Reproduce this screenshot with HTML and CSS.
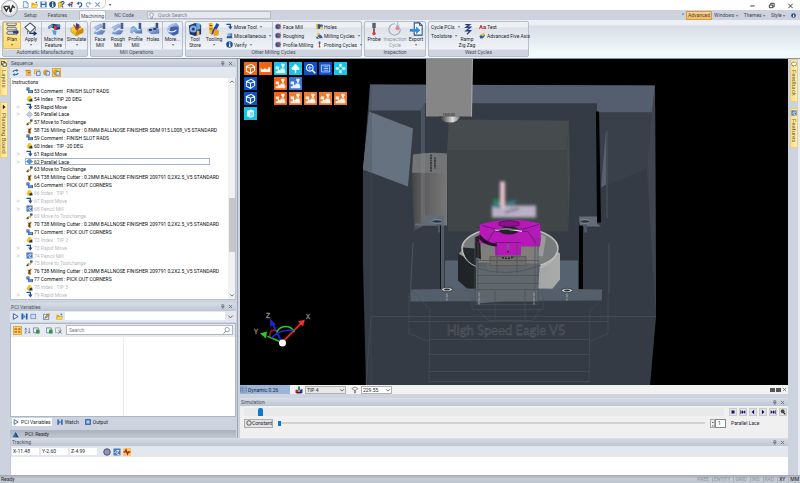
FILE: index.html
```html
<!DOCTYPE html>
<html lang="en">
<head>
<meta charset="utf-8">
<title>Machining</title>
<link rel="stylesheet" href="styles.css">
</head>
<body>
<svg class="defs" aria-hidden="true">
<defs>
<linearGradient id="gb" x1="0" y1="0" x2="1" y2="1"><stop offset="0" stop-color="#cfe0f8"/><stop offset="1" stop-color="#4468b4"/></linearGradient>
<linearGradient id="gy" x1="0" y1="0" x2="0" y2="1"><stop offset="0" stop-color="#ffe75a"/><stop offset="1" stop-color="#e8a400"/></linearGradient>
</defs>
<symbol id="new" viewBox="0 0 16 16"><path d="M3 1h7l4 4v10H3z" fill="#eaf3ff" stroke="#4d7ec0" stroke-width="1.5"/><path d="M10 1v4h4" fill="none" stroke="#4d7ec0"/></symbol>
<symbol id="open" viewBox="0 0 16 16"><path d="M1 4h5l2 2h6v8H1z" fill="#e4a81c"/><path d="M4 8h12l-3 7H1z" fill="#ffd95a" stroke="#b98512" stroke-width=".7"/><path d="M9 3l5-2v4" fill="#2d66c4"/></symbol>
<symbol id="save" viewBox="0 0 16 16"><path d="M1 1h13l1 1v13H1z" fill="#2c64b8"/><path d="M4 1h8v5H4zM4 9h8v6H4z" fill="#e5f0ff"/></symbol>
<symbol id="info" viewBox="0 0 16 16"><circle cx="8" cy="8" r="7.5" fill="#1c4f94"/><path d="M7 3h3v2H7zM6 6h4v6h1v1H6v-1h1V7H6z" fill="#fff"/></symbol>
<symbol id="help" viewBox="0 0 16 16"><path d="M1 3l8-2v12l-8 2z" fill="#f5c83a" stroke="#a4770e"/><path d="M6 4q5-5 8-1 0 3-4 5v2" fill="none" stroke="#204f9b" stroke-width="2.4"/><path d="M9 12h3v3H9z" fill="#204f9b"/></symbol>
<symbol id="move" viewBox="0 0 16 16"><path d="M1 8l6-4v3h4v3H7v4z" fill="#2a67c0"/><path d="M8 2h6v4H8z" fill="#d8392d"/><path d="M10 6h2v8h-2z" fill="#7f2b25"/></symbol>
<symbol id="undo" viewBox="0 0 16 16"><path d="M4 5q9-3 9 3 0 5-6 6" fill="none" stroke="#2d63ba" stroke-width="2.6"/><path d="M1 6l6-5v8z" fill="#2d63ba"/></symbol>
<symbol id="redo" viewBox="0 0 16 16"><path d="M12 5Q3 2 3 8q0 5 6 6" fill="none" stroke="#93add5" stroke-width="2.6"/><path d="M15 6L9 1v8z" fill="#93add5"/></symbol>
<symbol id="cross" viewBox="0 0 16 16"><path d="M3 3l10 10M13 3L3 13" stroke="#879fc5" stroke-width="2.6"/></symbol>
<symbol id="x" viewBox="0 0 8 8"><path d="M1.500 1.500l5 5M6.500 1.500l-5 5" stroke="#4e555f" stroke-width="1.100"/></symbol>
<symbol id="pin" viewBox="0 0 8 8"><path d="M3 1h3v3.500H3zM2 4.500h5M4.500 4.500V8" fill="none" stroke="#59616d"/></symbol>
<symbol id="plan" viewBox="0 0 16 16"><g fill="#e4e6e8" stroke="#444b55" stroke-width=".9"><rect x="2" y="1" width="11" height="3" rx="1.500"/><rect x="2" y="6" width="11" height="3" rx="1.500"/><rect x="2" y="11" width="11" height="3" rx="1.500"/></g><path d="M9 10h4V8l3 3.500-3 3.500v-2H9z" fill="#214985"/></symbol>
<symbol id="apply" viewBox="0 0 16 16"><path d="M7 1l6 5-6 6-6-6z" fill="#f5f6f7" stroke="#495262" stroke-width="1.200"/><path d="M4 9v5M13 7v3" stroke="#6b7585"/><path d="M11 10l4 3-4 3z" fill="#16335f"/><path d="M6 13h6" stroke="#16335f" stroke-width="1.500"/></symbol>
<symbol id="feat" viewBox="0 0 16 16"><path d="M2 5l4-3 9 1v5l-4 1-6-3-3 2z" fill="#1e3566"/><path d="M1 5l5-3 1 3-5 3z" fill="#7896c8"/><path d="M8 4h3v5H8z" fill="#d33c2f"/><path d="M6 9l5 1-1 5-3-1z" fill="#52a1df"/><path d="M11 3h4v3h-4z" fill="#4776b7"/></symbol>
<symbol id="sim" viewBox="0 0 16 16"><path d="M1 7l8-3 6 4v4l-8 4-6-5z" fill="url(#gy)" stroke="#9e7509" stroke-width=".5"/><path d="M7 15V11l8-4v5z" fill="#c98c00"/><path d="M7 1l4 2-2 7-3-2z" fill="#33437b"/><path d="M4 3l4 6 4-4" fill="none" stroke="#df3c26" stroke-width="1.300"/></symbol>
<symbol id="mill" viewBox="0 0 16 16"><path d="M1 6l8-4 2 3-4 4 7 1-3 4q-6 1-10-1l3-4z" fill="url(#gb)" stroke="#7e96c2" stroke-width=".5"/><path d="M3 11q4-1 6-4" fill="none" stroke="#e6effc" stroke-width="1.300"/><path d="M11 1h3v7h-3z" fill="#304979"/><path d="M12.500 1v7" stroke="#94acd4" stroke-width=".6"/></symbol>
<symbol id="profile" viewBox="0 0 16 16"><path d="M1 12q1-8 5-7 2 5 5 5l4-2v5H8q-3-4-4 0z" fill="url(#gb)"/><path d="M2 8q3-5 6 0t6 0" fill="none" stroke="#5ab0df" stroke-width="1.300"/><path d="M11 1h3v7h-3z" fill="#3b5b93"/></symbol>
<symbol id="holes" viewBox="0 0 16 16"><path d="M1 7l9-2 5 3v5l-9 1-5-4z" fill="url(#gb)"/><ellipse cx="5" cy="9" rx="2" ry="1.200" fill="#25365a"/><ellipse cx="10" cy="8" rx="2" ry="1.200" fill="#25365a"/><path d="M11 1h3v6h-3z" fill="#32518c"/></symbol>
<symbol id="more" viewBox="0 0 16 16"><path d="M2 5l4-3 6-1 3 4-1 8-5 3-6-3-2-4z" fill="url(#gb)"/><path d="M5 6q6-2 9 0v7l-6 2-4-3z" fill="#3f60ac"/><path d="M2 10q6 3 10-1" fill="none" stroke="#e2ecfc" stroke-width="1.300"/></symbol>
<symbol id="store" viewBox="0 0 16 16"><path d="M1 4l7-3 7 2v11l-7 2-6-2z" fill="#19366e"/><circle cx="6" cy="8" r="4" fill="#88aee2"/><circle cx="6" cy="8" r="1.800" fill="#203f77"/><path d="M9 1l5 1v6l-4 1z" fill="#65a5e3"/><path d="M10 10h3v5h-3z" fill="#ecb53e"/></symbol>
<symbol id="tooling" viewBox="0 0 16 16"><path d="M2 1h4l1 6-1 6-3 1z" fill="#f3b71d"/><path d="M11 1l3 2-5 9-4 3 1-5z" fill="#1e4aa5"/><path d="M9 8l5 2-1 5-5 1-1-3z" fill="#ef9f13"/><path d="M3 4h3M3 8h3" stroke="#704a09"/></symbol>
<symbol id="rapid" viewBox="0 0 16 16"><path d="M1 3h9v6" fill="none" stroke="#1e4f9d" stroke-width="3"/><path d="M5 8h10l-5 7z" fill="#1e4f9d"/></symbol>
<symbol id="misc" viewBox="0 0 16 16"><path d="M1 14h14l-2-5H3z" fill="#2459a2"/><circle cx="7" cy="6" r="4" fill="#77aee5"/><path d="M10 3h4v6h-4z" fill="#5f7395"/></symbol>
<symbol id="bluemill" viewBox="0 0 16 16"><circle cx="7" cy="8" r="6.500" fill="#5575b6"/><path d="M3 5h7v7H3z" fill="#223e78"/><path d="M5 7l8-5M5 8h9M6 9l7 5" stroke="#df5144" stroke-width="1.500"/></symbol>
<symbol id="hole2" viewBox="0 0 16 16"><path d="M1 2h5v12H1z" fill="#d4a51e"/><path d="M5 3h4v10H5z" fill="#1d3770"/><circle cx="12" cy="7" r="4" fill="#2e62b5"/><path d="M11 8h4v7h-4z" fill="#f2bb2e"/></symbol>
<symbol id="cyc" viewBox="0 0 16 16"><path d="M3 3h6v7H3z" fill="#ecb31a"/><path d="M7 6q8 0 8 8H8q0-4-5-4z" fill="#345da4"/><path d="M1 10l7 5H1z" fill="#102d5f"/></symbol>
<symbol id="probe" viewBox="0 0 16 16"><path d="M6 1h4v6H6z" fill="#55637a"/><path d="M7 7h2v5H7z" fill="#8c4540"/><circle cx="8" cy="13" r="2" fill="#d94235"/></symbol>
<symbol id="insp" viewBox="0 0 16 16"><path d="M14 8A6.500 6.500 0 1 1 8 2" fill="none" stroke="#a5abb6" stroke-width="1.300"/><path d="M11 0v5M9 3l2 3 2-3" stroke="#92b7dc" fill="none"/><circle cx="11" cy="7" r="2.400" fill="#df8d8b"/></symbol>
<symbol id="export" viewBox="0 0 16 16"><path d="M6 1h6l3 3v11H6z" fill="#f8fbff" stroke="#284e88" stroke-width="1.200"/><path d="M12 1v3h3" fill="none" stroke="#284e88"/><path d="M1 8h7V5l5 4.500L8 14v-3H1z" fill="#2f91db"/></symbol>
<symbol id="zig" viewBox="0 0 16 16"><path d="M6 3h5l-4 3h5l-5 4h5l-4 4" fill="none" stroke="#283e7b" stroke-width="1.500"/></symbol>
<symbol id="five" viewBox="0 0 16 16"><path d="M1 9l7-4 6 3-5 6-6 1z" fill="#245aab"/><path d="M4 6l8-5 1 6-5 3z" fill="#eeb832"/></symbol>
<symbol id="refresh" viewBox="0 0 16 16"><path d="M2 7q2-5 9-4M14 9q-2 5-9 4" fill="none" stroke="#2b669f" stroke-width="2.500"/><path d="M10 0l5 3-5 4zM6 16l-5-3 5-4z" fill="#2b669f"/></symbol>
<symbol id="doc1" viewBox="0 0 16 16"><path d="M1 2h12v3H1z" fill="#c98c16"/><path d="M3 5h10v10H3z" fill="#f7ca5c" stroke="#b88216"/><path d="M6 8h6M6 11h4" stroke="#b63824" stroke-width="1.500"/></symbol>
<symbol id="doc2" viewBox="0 0 16 16"><path d="M1 2h12v9H1z" fill="#f2d17a" stroke="#ac8127"/><path d="M6 6h8v9H6z" fill="#d9e9ff" stroke="#2d62a8" stroke-width="1.500"/></symbol>
<symbol id="doc3" viewBox="0 0 16 16"><circle cx="7" cy="8" r="6" fill="#e2b038" stroke="#9b711d"/><path d="M7 6h8v8H7z" fill="#e7edf7" stroke="#39649b" stroke-width="1.500"/></symbol>
<symbol id="comment" viewBox="0 0 16 16"><path d="M1 1h7v7H1z" fill="#25559d"/><path d="M2 3h5M2 5h5" stroke="#b3d1f1"/><path d="M5 7h11v7H5z" fill="#275ca7"/><path d="M7 9h7M7 11.500h7" stroke="#fff"/></symbol>
<symbol id="index" viewBox="0 0 16 16"><path d="M1 11l5-9 5 1 3 7-4 5z" fill="#f4c619"/><path d="M8 10l6-2 1 7H6z" fill="#28374f"/><path d="M1 11l7 1v3z" fill="#d89c00"/></symbol>
<symbol id="lace" viewBox="0 0 16 16"><path d="M8 1l7 7-7 7-7-7z" fill="#e2deef" stroke="#7a8daf"/><path d="M3 7h10M5 4h6M4 10h8" stroke="#9a94ba"/></symbol>
<symbol id="laceb" viewBox="0 0 16 16"><path d="M8 1l8 7-8 7-8-7z" fill="#3d82c8"/><path d="M3 7h10M5 4h6M4 10h8" stroke="#9cc9ed"/></symbol>
<symbol id="change" viewBox="0 0 16 16"><path d="M1 14l5-6 4 2 3-7" fill="none" stroke="#d69c28" stroke-width="2.500"/><path d="M9 1h6v5H9z" fill="#315a9a"/><circle cx="4" cy="12" r="2.500" fill="#3c455b"/></symbol>
<symbol id="cutter" viewBox="0 0 16 16"><path d="M3 1l3 4 5-4 2 3-3 4 2 6-4 2-4-4 1-5z" fill="#bb7517"/><path d="M6 5l3 1-2 7" stroke="#2f2a21" stroke-width="2" fill="none"/></symbol>
<symbol id="pencil" viewBox="0 0 16 16"><path d="M1 1h14v14H1z" fill="#4c77b6"/><path d="M3 10q4-7 9-5l-5 6 6 3" fill="none" stroke="#e9f3ff" stroke-width="2"/></symbol>
<symbol id="play" viewBox="0 0 16 16"><path d="M3 1.500L14 8 3 14.500z" fill="#eef5ff" stroke="#1e4e99" stroke-width="2"/></symbol>
<symbol id="step" viewBox="0 0 16 16"><path d="M1 1h4v14H1zM11 1h4v14h-4z" fill="#2561a6"/><path d="M5 3l6 5-6 5z" fill="#4c8fd2"/></symbol>
<symbol id="stopb" viewBox="0 0 16 16"><rect x="2" y="3" width="11" height="10" fill="#cfe0f6" stroke="#7293c3" stroke-width="2"/></symbol>
<symbol id="outp" viewBox="0 0 16 16"><rect x="2" y="2" width="12" height="12" fill="#a9c9f0" stroke="#2258a5" stroke-width="3"/></symbol>
<symbol id="edit" viewBox="0 0 16 16"><path d="M1 3h12v12H1z" fill="#e8f1fc" stroke="#39659a" stroke-width="1.500"/><path d="M4 12l2-4 6-7 3 3-7 7z" fill="#e8a01c" stroke="#523c1d"/></symbol>
<symbol id="cat" viewBox="0 0 16 16"><path d="M1 3h6v4H1zM1 9h6v4H1zM9 3h6v4H9zM9 9h6v4H9z" fill="#c47b1a"/></symbol>
<symbol id="az" viewBox="0 0 16 16"><path d="M2 7l2-5 2 5M2 9h4l-4 5h4M12 2v12M9 11l3 3 3-3" fill="none" stroke="#45689e" stroke-width="1.500"/></symbol>
<symbol id="grid1" viewBox="0 0 16 16"><path d="M1 2h11v11H1z" fill="#e9eef6" stroke="#4f6585" stroke-width="1.500"/><path d="M7 6h8v9H7z" fill="#379342"/></symbol>
<symbol id="grid2" viewBox="0 0 16 16"><path d="M1 2h11v11H1z" fill="#eee" stroke="#888f98" stroke-width="1.500"/><path d="M8 7l7 8M15 7l-7 8" stroke="#777" stroke-width="2"/></symbol>
<symbol id="lens" viewBox="0 0 16 16"><circle cx="9.500" cy="6" r="5" fill="none" stroke="#5c6470" stroke-width="1.400"/><path d="M6 10l-5 5" stroke="#5c6470" stroke-width="1.600"/></symbol>
<symbol id="cube" viewBox="0 0 16 16"><path d="M2 5l7-3 5 3v6l-6 4-6-3zM2 5l6 2.500L14 5M8 7.500V15" fill="none" stroke="#fff" stroke-width="1.500"/></symbol>
<symbol id="cubef" viewBox="0 0 16 16"><path d="M3 4l6-2 4 2v8l-5 2-5-2z" fill="#dffaff"/><path d="M7 6l5-1v6l-5 2z" fill="#8edff3"/></symbol>
<symbol id="bed" viewBox="0 0 16 16"><path d="M1 13V7h1v2h4V8h3v1h3V6h3v7z" fill="#fff"/></symbol>
<symbol id="mach" viewBox="0 0 16 16"><path d="M1 5h5v5h2V8h6v3h1v4H1v-3h3V9H1z" fill="#fff" opacity=".88"/><path d="M9 1h5v3h-1v3h-3V4H9z" fill="#fff" opacity=".9"/></symbol>
<symbol id="tree" viewBox="0 0 16 16"><path d="M8 1l6 7-1 2H9v5H7v-5H3L2 8z" fill="#fff"/></symbol>
<symbol id="zoom" viewBox="0 0 16 16"><circle cx="7" cy="7" r="4.800" fill="none" stroke="#fff" stroke-width="1.500"/><path d="M10.500 10.500L15 15" stroke="#fff" stroke-width="2.300"/><path d="M7 4v6M4 7h6" stroke="#fff"/></symbol>
<symbol id="list" viewBox="0 0 16 16"><path d="M2 3h12v10H2z" fill="none" stroke="#fff"/><path d="M4 5.500h1M6 5.500h6M4 8h1M6 8h6M4 10.500h1M6 10.500h6" stroke="#fff"/></symbol>
<symbol id="axes" viewBox="0 0 16 16"><path d="M8 1v14M1 8h14" stroke="#c8f6fc" stroke-width="3"/><circle cx="8" cy="8" r="2" fill="#2ba1bd"/><path d="M6 3h4M6 13h4M3 6v4M13 6v4" stroke="#fff"/></symbol>
<symbol id="rgb" viewBox="0 0 16 16"><path d="M6 1h4v7H6z" fill="#209a37"/><path d="M1 7l6 1v6H1z" fill="#c4262c"/><path d="M9 8l6-2v8H9z" fill="#2438ba"/><path d="M3 12h10v3H3z" fill="#272b3a"/></symbol>
<symbol id="fan" viewBox="0 0 16 16"><path d="M2 5q6-6 12 0-3 4-5 3v6H7V8Q4 9 2 5z" fill="#f6f6f6" stroke="#555" stroke-width="1.200"/></symbol>
<symbol id="bubble" viewBox="0 0 16 16"><path d="M4 3h8l3 4-2 5H9l-3 3v-3H3L1 7z" fill="#fff" stroke="#555" stroke-width="1.600"/></symbol>
<symbol id="drop" viewBox="0 0 8 8"><path d="M1.500 3L4 5.500 6.500 3" fill="none" stroke="#444b55"/></symbol>
<symbol id="tri" viewBox="0 0 16 16"><path d="M8 2l7 12H1z" fill="#2f70b5"/><path d="M8 2v12h7z" fill="#1d4d8c"/></symbol>
<symbol id="ball" viewBox="0 0 16 16"><circle cx="8" cy="8" r="6.500" fill="#9093b5" stroke="#4d5076" stroke-width="2"/></symbol>
<symbol id="wave" viewBox="0 0 16 16"><path d="M1 8h3l2-4 3 8 2-4h4" fill="none" stroke="#a52926" stroke-width="3"/></symbol>
<symbol id="b-stop" viewBox="0 0 16 16"><path d="M4 4h8v8H4z" fill="#10106e"/></symbol>
<symbol id="b-first" viewBox="0 0 16 16"><path d="M1 3h2v10H1zM8 3v10L3 8zM14 3v10L8 8z" fill="#10106e"/></symbol>
<symbol id="b-prev" viewBox="0 0 16 16"><path d="M11 2v12L4 8z" fill="#10106e"/></symbol>
<symbol id="b-next" viewBox="0 0 16 16"><path d="M5 2v12l7-6z" fill="#10106e"/></symbol>
<symbol id="b-last" viewBox="0 0 16 16"><path d="M15 3h-2v10h2zM8 3v10l5-5zM2 3v10l6-5z" fill="#10106e"/></symbol>
<symbol id="b-mag" viewBox="0 0 16 16"><circle cx="7" cy="6" r="4" fill="#555" stroke="#222" stroke-width="2"/><path d="M9 9l5 5" stroke="#222" stroke-width="3"/></symbol>
<symbol id="layers" viewBox="0 0 16 16"><path d="M1 1h9v9H1z" fill="#fff" stroke="#222" stroke-width="2"/><path d="M5 5h9v9H5z" fill="#fff" stroke="#222" stroke-width="2"/></symbol>
</svg>

<header class="titlebar">
  <button class="orb" aria-label="Application menu"><svg viewBox="0 0 32 32"><circle cx="16" cy="16" r="15" fill="#dcdee2" stroke="#8d929a" stroke-width="1.500"/><circle cx="16" cy="14" r="12" fill="#f4f5f6"/><path d="M5 12l5 9 5-9 3 9 4-10 4 4M7 12h6M15 21h6" fill="none" stroke="#2e3033" stroke-width="2.600"/></svg></button>
  <nav class="quick" aria-label="Quick access">
    <button aria-label="New"><svg><use href="#new"/></svg></button><button aria-label="Open"><svg><use href="#open"/></svg></button><button aria-label="Save"><svg><use href="#save"/></svg></button><button aria-label="Information"><svg><use href="#info"/></svg></button><button aria-label="Help"><svg><use href="#help"/></svg></button><button aria-label="Move"><svg><use href="#move"/></svg></button><button aria-label="Undo"><svg><use href="#undo"/></svg></button><button aria-label="Redo"><svg><use href="#redo"/></svg></button><button aria-label="Delete"><svg><use href="#cross"/></svg></button>
  </nav>
  <button class="quick-more" aria-label="More">▾</button>
  <div class="winbtns">
    <button aria-label="Minimize"><svg viewBox="0 0 8 8"><path d="M1.500 4.500h5" stroke="#222"/></svg></button>
    <button aria-label="Restore"><svg viewBox="0 0 8 8"><path d="M1.500 3.500h4v3h-4zM3 3V1.500h4v4H6" fill="none" stroke="#222"/></svg></button>
    <button aria-label="Close"><svg viewBox="0 0 8 8"><path d="M1.500 2l5 5M6.500 2l-5 5" stroke="#222"/></svg></button>
  </div>
</header>

<div class="tabs">
  <button class="tab">Setup</button><button class="tab">Features</button><button class="tab active">Machining</button><button class="tab wide">NC Code</button>
  <label class="qsearch"><svg viewBox="0 0 8 8"><path d="M4 1q2.500 0 2 2.500L5 5.500v2H3.500v-2L2 3.500Q1.500 1 4 1z" fill="#fff" stroke="#69717c" stroke-width=".7"/></svg><input aria-label="Quick Search" placeholder="Quick Search"></label>
  <div class="tabmenu"><span>^</span><button class="adv">Advanced</button><button>Windows <i>▾</i></button><button>Themes <i>▾</i></button><button>Style <i>▾</i></button><button aria-label="Help"><svg><use href="#info"/></svg></button></div>
</div>

<section class="ribbon">
  <div class="group g1"><div class="items">
    <button class="big on"><svg><use href="#plan"/></svg>Plan<i>▾</i></button>
    <button class="big"><svg><use href="#apply"/></svg>Apply<i>▾</i></button>
    <button class="big line"><svg><use href="#feat"/></svg>Machine<br>Feature</button>
    <button class="big line"><svg><use href="#sim"/></svg>Simulate<i>▾</i></button>
  </div><h2>Automatic Manufacturing</h2></div>
  <div class="group g2"><div class="items">
    <button class="big"><svg><use href="#mill"/></svg>Face<br>Mill</button>
    <button class="big"><svg><use href="#mill"/></svg>Rough<br>Mill</button>
    <button class="big"><svg><use href="#profile"/></svg>Profile<br>Mill</button>
    <button class="big"><svg><use href="#holes"/></svg>Holes</button>
    <button class="big line"><svg><use href="#more"/></svg>More...<i>▾</i></button>
  </div><h2>Mill Operations</h2></div>
  <div class="group g3"><div class="items">
    <button class="big"><svg><use href="#store"/></svg>Tool<br>Store</button>
    <button class="big"><svg><use href="#tooling"/></svg>Tooling<i>▾</i></button>
    <div class="col"><button><svg><use href="#rapid"/></svg>Move Tool <i>▾</i></button><button><svg><use href="#misc"/></svg>Miscellaneous <i>▾</i></button><button><svg><use href="#info"/></svg>Verify <i>▾</i></button></div>
    <div class="col line"><button><svg><use href="#bluemill"/></svg>Face Mill</button><button><svg><use href="#bluemill"/></svg>Roughing</button><button><svg><use href="#bluemill"/></svg>Profile Milling</button></div>
    <div class="col"><button><svg><use href="#hole2"/></svg>Holes</button><button><svg><use href="#cyc"/></svg>Milling Cycles <i>▾</i></button><button><svg><use href="#probe"/></svg>Probing Cycles <i>▾</i></button></div>
  </div><h2>Other Milling Cycles</h2></div>
  <div class="group g4"><div class="items">
    <button class="big"><svg><use href="#probe"/></svg>Probe</button>
    <button class="big" disabled><svg><use href="#insp"/></svg>Inspection<br>Cycle</button>
    <button class="big"><svg><use href="#export"/></svg>Export<i>▾</i></button>
  </div><h2>Inspection</h2></div>
  <div class="group g5"><div class="items">
    <div class="col"><button>Cycle PCIs <i>▾</i></button><button>Toolstore <i>▾</i></button></div>
    <button class="big"><svg><use href="#zig"/></svg>Ramp<br>Zig Zag</button>
    <div class="col"><button><b class="aa">Aa</b>Text</button><button><svg><use href="#five"/></svg>Advanced Five Axis</button></div>
  </div><h2>West Cycles</h2></div>
</section>

<div class="middle">
  <nav class="dock left"><button class="layers"><svg><use href="#layers"/></svg><span>Layers</span></button><button class="board"><svg><use href="#b-next"/></svg><span>Planning Board</span></button></nav>

  <div class="work">
    <div class="upper">
      <aside class="side">
        <section class="panel seq">
          <header class="head"><h2>Sequence</h2><button aria-label="Pin"><svg><use href="#pin"/></svg></button><button aria-label="Close"><svg><use href="#x"/></svg></button></header>
          <div class="tools"><button aria-label="Refresh"><svg><use href="#refresh"/></svg></button><button class="gap" aria-label="Document"><svg><use href="#doc1"/></svg></button><button aria-label="Copy"><svg><use href="#doc2"/></svg></button><button aria-label="Properties"><svg><use href="#doc3"/></svg></button><button class="on" aria-label="Filter"><svg><use href="#doc3"/></svg></button></div>
          <div class="treewrap">
            <div class="tree">
              <h3>Instructions</h3>
              <ul>
                <li><svg><use href="#comment"/></svg><span>53 Comment : FINISH SLOT RADS</span></li>
                <li><svg><use href="#index"/></svg><span>54 Index : TIP 20 DEG</span></li>
                <li class="ex"><svg><use href="#rapid"/></svg><span>55 Rapid Move</span></li>
                <li class="ex"><svg><use href="#lace"/></svg><span>56 Parallel Lace</span></li>
                <li><svg><use href="#change"/></svg><span>57 Move to Toolchange</span></li>
                <li><svg><use href="#cutter"/></svg><span>58 T26 Milling Cutter : 0.8MM BALLNOSE FINISHER SDM 915 L008_V5 STANDARD</span></li>
                <li><svg><use href="#comment"/></svg><span>59 Comment : FINISH SLOT RADS</span></li>
                <li><svg><use href="#index"/></svg><span>60 Index : TIP -20 DEG</span></li>
                <li class="ex"><svg><use href="#rapid"/></svg><span>61 Rapid Move</span></li>
                <li class="ex sel"><svg><use href="#laceb"/></svg><span>62 Parallel Lace</span></li>
                <li><svg><use href="#change"/></svg><span>63 Move to Toolchange</span></li>
                <li><svg><use href="#cutter"/></svg><span>64 T38 Milling Cutter : 0.2MM BALLNOSE FINISHER 209791 0,2X2.5_V5 STANDARD</span></li>
                <li><svg><use href="#comment"/></svg><span>65 Comment : PICK OUT CORNERS</span></li>
                <li class="dim"><svg><use href="#index"/></svg><span>66 Index : TIP 1</span></li>
                <li class="ex dim"><svg><use href="#rapid"/></svg><span>67 Rapid Move</span></li>
                <li class="ex dim"><svg><use href="#pencil"/></svg><span>68 Pencil Mill</span></li>
                <li class="dim"><svg><use href="#change"/></svg><span>69 Move to Toolchange</span></li>
                <li><svg><use href="#cutter"/></svg><span>70 T38 Milling Cutter : 0.2MM BALLNOSE FINISHER 209791 0,2X2.5_V5 STANDARD</span></li>
                <li><svg><use href="#comment"/></svg><span>71 Comment : PICK OUT CORNERS</span></li>
                <li class="dim"><svg><use href="#index"/></svg><span>72 Index : TIP 2</span></li>
                <li class="ex dim"><svg><use href="#rapid"/></svg><span>73 Rapid Move</span></li>
                <li class="ex dim"><svg><use href="#pencil"/></svg><span>74 Pencil Mill</span></li>
                <li class="dim"><svg><use href="#change"/></svg><span>75 Move to Toolchange</span></li>
                <li><svg><use href="#cutter"/></svg><span>76 T38 Milling Cutter : 0.2MM BALLNOSE FINISHER 209791 0,2X2.5_V5 STANDARD</span></li>
                <li><svg><use href="#comment"/></svg><span>77 Comment : PICK OUT CORNERS</span></li>
                <li class="dim"><svg><use href="#index"/></svg><span>78 Index : TIP 3</span></li>
                <li class="ex dim"><svg><use href="#rapid"/></svg><span>79 Rapid Move</span></li>
              </ul>
            </div>
            <div class="scroll"><svg class="up"><use href="#drop"/></svg><div class="thumb"></div><svg><use href="#drop"/></svg></div>
          </div>
        </section>

        <section class="panel pci">
          <header class="head"><h2>PCI Variables</h2><button aria-label="Pin"><svg><use href="#pin"/></svg></button><button aria-label="Close"><svg><use href="#x"/></svg></button></header>
          <div class="tools"><button aria-label="Run"><svg><use href="#play"/></svg></button><button aria-label="Step"><svg><use href="#step"/></svg></button><button aria-label="Stop"><svg><use href="#stopb"/></svg></button><button class="gap" aria-label="Edit"><svg><use href="#edit"/></svg></button><button class="gap" aria-label="Open"><svg><use href="#open"/></svg></button><input aria-label="PCI file"><svg class="dd"><use href="#drop"/></svg></div>
          <div class="box">
            <div class="tools"><button class="on" aria-label="Categorized"><svg><use href="#cat"/></svg></button><button aria-label="Sort"><svg><use href="#az"/></svg></button><button aria-label="Pages"><svg><use href="#grid1"/></svg></button><button class="gap" aria-label="Add"><svg><use href="#grid1"/></svg></button><button aria-label="Remove"><svg><use href="#grid2"/></svg></button><label class="search"><input aria-label="Search" placeholder="Search"><svg><use href="#lens"/></svg></label></div>
            <div class="split"><div></div><div></div></div>
          </div>
          <nav class="ptabs"><button class="active"><svg><use href="#play"/></svg>PCI Variables</button><button><svg><use href="#step"/></svg>Watch</button><button><svg><use href="#outp"/></svg>Output</button></nav>
        </section>
        <div class="pcistat"><svg><use href="#tri"/></svg><span>PCI: Ready</span></div>
      </aside>

      <main class="stage">
        <div class="view">
          <svg class="scene" viewBox="240 59 548 327" preserveAspectRatio="xMidYMid slice" aria-label="Machine simulation">
            <defs>
              <linearGradient id="cyl"><stop offset="0" stop-color="#454545"/><stop offset=".25" stop-color="#5a5a5a"/><stop offset="1" stop-color="#777"/></linearGradient>
              <linearGradient id="nose"><stop offset="0" stop-color="#222"/><stop offset=".3" stop-color="#777"/><stop offset=".65" stop-color="#ddd"/><stop offset="1" stop-color="#777"/></linearGradient>
              <linearGradient id="tbl"><stop offset="0" stop-color="#8e9090"/><stop offset="1" stop-color="#a9abab"/></linearGradient>
              <filter id="soft" x="-50%" y="-50%" width="200%" height="200%"><feGaussianBlur stdDeviation="1.500"/></filter>
            </defs>
            <path d="M240 59h548v327H240z" fill="#000"/>
            <path d="M370 85l285 1 1 232-6 68H366l-3-120v-96z" fill="#353b44"/>
            <path d="M370 85l285 1-3 27h-55v-9H425l-4 7h-52z" fill="#555e6e"/>
            <path d="M600 113h52l-5 56-46 19z" fill="#3a4049"/>
            <path d="M652 113l3-27 1 232-5-80-4-69z" fill="#3e4550"/>
            <path d="M425 104h172v119H425z" fill="#343b45"/>
            <path d="M369 112l44 17-5 58-45-17z" fill="#667280"/>
            <path d="M371 86v300" stroke="#434a55" stroke-width=".6"/>
            <path d="M369 113l3 1-2 58-7-2z" fill="#5d6875"/>
            <path d="M421 111l4-7v120h-4z" fill="#4b5361"/>
            <path d="M449 120l120 1-2 30H447z" fill="#464b4e"/>
            <path d="M447 151h120l1 81H448z" fill="#404548"/>
            <path d="M567 151l2-30 1 60-2 51z" fill="#454b4f"/>
            <path d="M426 59h46v58h-46z" fill="#868686"/><path d="M472 59h1l-1 58h-1z" fill="#aaa"/>
            <path d="M439 117h21q-2 6-10 6t-11-6z" fill="url(#nose)"/>
            <text x="449" y="116" class="tiny">HSK40</text>
            <path d="M413 155q16-3 34-1v19h-35z" fill="#737475"/>
            <path d="M412 173h35v53h-23l-10 5z" fill="url(#cyl)"/>
            <path d="M431 155v17M435 158v11" stroke="#2c2c2c" stroke-width="1.500" stroke-dasharray="2 .5"/>
            <path d="M421 154h4v70h-4z" fill="#8b94a1" opacity=".25"/>
            <path d="M412 173h35" stroke="#888" stroke-width=".5"/>
            <path d="M424 216h20v10h-29v-2h9zM579 217h18v7l4 3h-21z" fill="#626c78"/>
            <path d="M436 225h5v8h-3v-5zM582 225h5v8h-3v-5z" fill="#4b5563"/>
            <ellipse cx="437" cy="222" rx="5" ry="1.800" fill="#30363e" stroke="#a6aeb7" stroke-width=".6"/><ellipse cx="585" cy="222" rx="5" ry="1.800" fill="#30363e" stroke="#a6aeb7" stroke-width=".6"/>
            <path d="M596 112l3 0 2 111h-4zM579 226h4v64h-4z" fill="#020202"/>
            <path d="M441 226h3v65h-3z" fill="#515b69"/><path d="M440 226h1v64h-1z" fill="#111"/>
            <path d="M606 131v54l-5 3z" fill="#58626f"/>
            <path d="M607 131v88M413 243l-3 59M609 244v50" stroke="#535b66" stroke-width=".8"/>
            <path d="M445 261h133v29H445z" fill="#566270"/>
            <path d="M459 254l16-17 65 1 20 16v26l-9 11h-77l-15-10z" fill="url(#tbl)"/>
            <path d="M458 254l18 10v27l-9-2-9-8z" fill="#202427"/>
            <ellipse cx="510" cy="249" rx="48" ry="22" fill="#777b7c" stroke="#bbbdbd" stroke-width="1.500"/>
            <path d="M463 248q0 17 24 22v-20z" fill="#24282b"/>
            <path d="M463 254q5 18 48 18 40 0 46-19" fill="none" stroke="#bfc1c1" stroke-width="1"/>
            <path d="M476 268l64-4-3 35-60 5z" fill="#5c646e"/>
            <path d="M411 290l66-1h61l64 1v11l-191 1z" fill="#555e6b"/>
            <path d="M476 258h62v44h-62z" fill="#62686d" opacity=".9"/>
            <path d="M478 240l67-5-2 23-5 6-60-1z" fill="#7e7e7b"/>
            <path d="M475 238l5-3 1 25-6-3z" fill="#222"/>
            <path d="M541 235l5 2-3 20-5-1z" fill="#999b98"/>
            <path d="M480 225q30-9 60-1l1 16-1 7h-19v9h-26v-9l-16-4z" fill="#b817ba"/>
            <path d="M482 226q28 10 57-1M487 243l7-11h34l8 12M495 243h26" fill="none" stroke="#69106e" stroke-width=".8"/>
            <path d="M480 235q7 9 17 9v3q-13-1-18-8z" fill="#251126"/>
            <ellipse cx="509" cy="231" rx="10" ry="4" fill="#252127"/><path d="M495 231q13-3 27 1" fill="none" stroke="#e7dbe7" stroke-width="1.300"/>
            <path d="M499 223q11-4 20 0v3q-10 3-20 0z" fill="#8e128e" stroke="#300a35" stroke-width=".6"/>
            <path d="M508 244v9" stroke="#49094d" stroke-width="2"/><path d="M508 244v7" stroke="#efdeef" stroke-width=".7"/>
            <path d="M490 257h36v9h-36z" fill="#706e68" stroke="#4d4e4d" stroke-width=".6"/>
            <path d="M502 258q7 2 12-1" fill="none" stroke="#252525" stroke-width="1.500" stroke-dasharray="2 1"/>
            <g fill="none" stroke="#484f56" stroke-width=".7">
              <path d="M475 238v67h63v-67M478 242v60M535 242v60M486 238l11-8h28l11 11M497 244v30M517 244v30M475 268q32 11 66-2M475 276h64M475 284h64M475 290h64M472 299v11h71v-12M478 311l11 10h44l7-11M495 290v30M525 290v30M475 261h64"/>
              <path d="M411 290l19 20-1 72h160l1-71 12-12M371 317h285M409 294v40l20 8M608 294v40l-18 8M409 322h199M429 340h161M429 355h161M429 372h161M371 317l-5 68M429 382h161"/>
            </g>
            <g fill="#c3c6ca" stroke="#282c31" stroke-width=".7"><ellipse cx="447" cy="290" rx="5.500" ry="2.200"/><ellipse cx="567" cy="291" rx="5.500" ry="2.200"/></g>
            <g fill="#30353b"><ellipse cx="447" cy="290" rx="3" ry="1"/><ellipse cx="567" cy="291" rx="3" ry="1"/></g>
            <path d="M447 294v7M567 294v7M479 293v12M534 293v12" stroke="#9299a3" stroke-width="1.200" stroke-dasharray="4 1"/>
            <text x="506" y="335" class="machine">High Speed Eagle V5</text>
            <g filter="url(#soft)"><path d="M492 206h44v12h-44z" fill="#bab1c7"/><path d="M500 182h5v27h-5z" fill="#e4bfc8"/><path d="M490 207l9-6 2 8zM505 203l12-3-5 8z" fill="#397b85"/><path d="M492 201l6-2-1 6z" fill="#18925d"/><path d="M505 213l14-4" stroke="#776b82" stroke-width="2"/></g>
            <g fill="none" stroke-linecap="round"><path d="M282 343l19-19" stroke="#e22626" stroke-width="1.800"/><path d="M282 343l-14-6" stroke="#13c71b" stroke-width="1.600"/><path d="M282 343l-9-18" stroke="#2020d9" stroke-width="1.800"/><path d="M277 332q3-5 9-5 5 0 8 5" stroke="#19d322" stroke-width="1.500"/><path d="M272 338q9-9 21-7" stroke="#2525dd" stroke-width="1.500"/><path d="M270 337q-1-8 6-6" stroke="#b51b1b" stroke-width="1.300"/></g>
            <path d="M305 320l-2 7-5-5z" fill="#f02f2f"/><path d="M260 334l7-2-1 7z" fill="#1dd326"/><path d="M270 319l6 6-6 2z" fill="#2222c8"/><circle cx="282.500" cy="343.500" r="3.500" fill="#fff"/>
            <text x="306" y="319" class="axis">X</text><text x="254" y="334" class="axis">Y</text><text x="266" y="318" class="axis">Z</text>
          </svg>
          <div class="vtools">
            <button class="o" aria-label="Solid"><svg><use href="#cube"/></svg></button><button class="o" aria-label="Table"><svg><use href="#bed"/></svg></button><button class="c" aria-label="Machine"><svg><use href="#mach"/></svg></button><button class="c" aria-label="Tree"><svg><use href="#tree"/></svg></button><button class="b" aria-label="Zoom"><svg><use href="#zoom"/></svg></button><button class="b" aria-label="List"><svg><use href="#list"/></svg></button><button class="c" aria-label="Axes"><svg><use href="#axes"/></svg></button>
            <button class="b first" aria-label="Wireframe"><svg><use href="#cube"/></svg></button><button class="o third" aria-label="Machine side"><svg><use href="#mach"/></svg></button><button class="l" aria-label="Machine back"><svg><use href="#mach"/></svg></button>
            <button class="b first" aria-label="Hidden line"><svg><use href="#cube"/></svg></button><button class="o third" aria-label="Machine view 1"><svg><use href="#mach"/></svg></button><button class="p" aria-label="Machine view 2"><svg><use href="#mach"/></svg></button><button class="p" aria-label="Machine view 3"><svg><use href="#mach"/></svg></button><button class="p" aria-label="Machine view 4"><svg><use href="#mach"/></svg></button><button class="p" aria-label="Machine view 5"><svg><use href="#mach"/></svg></button>
            <button class="c first" aria-label="Shaded"><svg><use href="#cubef"/></svg></button>
          </div>
        </div>
        <div class="vstat">
          <span class="dyn"><svg viewBox="0 0 16 16"><path d="M1 2h14v12H1zM1 6h14M1 10h14M5 2v12" fill="none" stroke="#53698b"/></svg>Dynamic 0.26</span>
          <svg><use href="#rgb"/></svg><label class="pick"><select aria-label="Datum"><option>TIP 4</option></select><svg><use href="#drop"/></svg></label>
          <svg><use href="#fan"/></svg><label class="pick white"><select aria-label="Tool length"><option>229.55</option></select><svg><use href="#drop"/></svg></label>
          <div class="vwin"><button aria-label="Restore view"></button><button aria-label="Tile view"></button><button aria-label="Close view"><svg><use href="#x"/></svg></button></div>
        </div>
        <section class="simul">
          <header class="head"><h2>Simulation</h2><button aria-label="Pin"><svg><use href="#pin"/></svg></button><button aria-label="Close"><svg><use href="#x"/></svg></button></header>
          <div class="srow"><input type="range" class="r1" aria-label="Position" min="0" max="100" value="3"><div class="trans"><button aria-label="Stop"><svg><use href="#b-stop"/></svg></button><button aria-label="First"><svg><use href="#b-first"/></svg></button><button aria-label="Previous"><svg><use href="#b-prev"/></svg></button><button aria-label="Next"><svg><use href="#b-next"/></svg></button><button aria-label="Last"><svg><use href="#b-last"/></svg></button><button aria-label="Magnify"><svg><use href="#b-mag"/></svg></button></div></div>
          <div class="srow two"><button class="const"><svg viewBox="0 0 8 8"><circle cx="4" cy="4" r="3" fill="none" stroke="#333"/></svg>Constant</button><input type="range" class="r2" aria-label="Speed" min="0" max="100" value="0"><div class="spin"><span>▴</span><span>▾</span></div><input class="num" aria-label="Step" value="1"><span class="op">Parallel Lace</span></div>
        </section>
      </main>
    </div>

    <section class="tracking">
      <header class="head"><h2>Tracking</h2><button aria-label="Pin"><svg><use href="#pin"/></svg></button><button aria-label="Close"><svg><use href="#x"/></svg></button></header>
      <div class="coords"><output>X-11.48</output><output>Y-2.60</output><output>Z-4.99</output><button aria-label="Sphere"><svg><use href="#ball"/></svg></button><button aria-label="Image"><svg><use href="#pencil"/></svg></button><button class="on" aria-label="Path"><svg><use href="#wave"/></svg></button></div>
      <div class="blank"></div>
    </section>
  </div>

  <nav class="dock right"><button class="feed"><svg><use href="#bubble"/></svg><span>Feedback</span></button><button class="fea"><svg><use href="#pencil"/></svg><span>Features</span></button></nav>
</div>

<footer class="status"><span>Ready</span><ul><li>FREE</li><li>ENTITY</li><li>GRID</li><li>INS</li><li>RAD</li><li class="on">XY</li><li class="on">MM</li></ul></footer>
</body>
</html>
```
FILE: styles.css
```css
* { box-sizing: border-box; margin: 0; padding: 0; }
body {
  display: flex; flex-direction: column; height: 100vh; overflow: hidden;
  font: 5px/6px Roboto, "Open Sans", sans-serif; color: #23272e; background: #ced4df;
}
button, input, select { font: inherit; color: inherit; border: 0; background: none; }
button { white-space: nowrap; }
h2, h3 { font: inherit; }
i { font-style: normal; font-size: 4px; color: #666e7a; }
ul { list-style: none; }
svg { display: block; flex: none; }
.defs { position: absolute; width: 0; height: 0; }

.titlebar { display: flex; height: 10px; flex: none; background: #fff; position: relative; }
.orb { position: absolute; left: 1px; top: 0; z-index: 2; }
.orb svg { width: 17px; height: 17px; }
.quick { display: flex; align-items: center; gap: 2px; margin-left: 18px; padding: 0 4px; height: 9px; border: 1px solid #d5d8dd; border-width: 0 1px 1px 0; border-radius: 0 0 6px; }
.quick svg { width: 7px; height: 7px; }
.quick button { width: 7px; }
.quick-more { margin-left: 3px; font-size: 4px; }
.winbtns { margin-left: auto; display: flex; gap: 12px; align-items: center; padding-right: 6px; }
.winbtns svg { width: 7px; height: 7px; }

.tabs { display: flex; align-items: stretch; height: 10px; flex: none; background: #cdd2dd; padding-left: 17px; }
.tab { width: 27px; color: #474d58; }
.tab.active { margin-left: 8px; background: #f4f6fa; border: 1px solid #b8bfcb; border-bottom: 0; border-radius: 2px 2px 0 0; }
.tab.wide { width: 36px; }
.qsearch { margin: 1px 0 1px 5px; width: 124px; display: flex; align-items: center; background: #e5e9ef; border: 1px solid #b7bdc8; }
.qsearch svg { width: 7px; height: 7px; }
.qsearch input { width: 90px; padding-left: 3px; }
input::placeholder { color: #777d87; opacity: 1; }
.tabmenu { margin-left: auto; display: flex; align-items: center; gap: 6px; padding-right: 4px; color: #414853; }
.tabmenu .adv { background: linear-gradient(#fbd28e, #f9b956); border: 1px solid #cf9c50; width: 26px; height: 9px; margin: 0 -4px; }
.tabmenu svg { width: 5px; height: 5px; }

.ribbon { display: flex; gap: 2px; height: 39px; flex: none; padding: 1px 2px; background: linear-gradient(#eceff4 0 5px, #d8dde7 6px, #f0fafc 33px); border-bottom: 1px solid #8f96a0; }
.group { display: flex; flex-direction: column; border: 1px solid #b7bdc9; border-radius: 2px; background: linear-gradient(#edf0f5 0 5px, #dde1e9 6px, #f0f4f8 27px, #cfd5e0 28px); }
.group h2 { text-align: center; height: 7px; color: #464e5d; }
.items { display: grid; height: 28px; }
.g1 { width: 86px; } .g1 .items { grid-template-columns: 18px 20px 24px 1fr; }
.g2 { width: 93px; } .g2 .items { grid-template-columns: 18px 18px 17px 18px 1fr; }
.g3 { width: 177px; } .g3 .items { grid-template-columns: 18px 20px 48px 42px 1fr; }
.g4 { width: 62px; } .g4 .items { grid-template-columns: 18px 24px 1fr; }
.g5 { width: 101px; } .g5 .items { grid-template-columns: 28px 20px 1fr; }
.big { display: flex; flex-direction: column; align-items: center; text-align: center; height: 27px; line-height: 6px; }
.big svg { width: 14px; height: 14px; }
.big i { line-height: 5px; }
.big.on { background: linear-gradient(#fff1b5, #ffd868); outline: 1px solid #e3c264; outline-offset: -1px; }
.big:disabled { color: #9298a2; }
.line { border-left: 1px solid #bcc3ce; }
.col { display: grid; grid-template-rows: repeat(3, 9px); padding-left: 2px; }
.col button { display: flex; align-items: center; gap: 1px; }
.col i { margin-left: 2px; }
.col svg { width: 7px; height: 7px; }
.aa { color: #b52a35; font-size: 6px; }

.middle { flex: 1; min-height: 0; display: flex; }
.dock { flex: none; display: flex; flex-direction: column; gap: 6px; align-items: flex-start; background: #ccd3de; }
.dock.left { width: 10px; }
.dock.right { width: 12px; padding-left: 2px; border-right: 2px solid #e8ecf2; }
.dock button { width: 8px; display: flex; flex-direction: column; align-items: center; gap: 3px; padding-top: 1px; background: linear-gradient(90deg, #ffe07a, #fff0b4); border: 1px solid #e4ce8c; color: #69603f; }
.dock span { writing-mode: vertical-rl; line-height: 6px; font-size: 6px; }
.dock svg { width: 6px; height: 6px; }
.layers { height: 37px; } .board { height: 56px; } .feed { height: 43px; } .fea { height: 40px; }

.work { flex: 1; min-width: 0; display: flex; flex-direction: column; }
.upper { flex: 1; min-height: 0; display: flex; gap: 2px; }
.side { width: 228px; flex: none; display: flex; flex-direction: column; padding-right: 1px; gap: 3px; border-right: 1px solid #9ca5b4; }
.head { display: flex; align-items: center; gap: 3px; height: 8px; flex: none; padding: 0 3px 0 1px; background: linear-gradient(#d8dde6, #bcc5d2); color: #4b5361; }
.head h2 { flex: 1; }
.head svg { width: 5px; height: 5px; }
.tools { display: flex; align-items: center; gap: 2px; height: 11px; flex: none; padding: 0 2px; background: #e2e7ef; }
.tools svg { width: 7px; height: 7px; }
.tools button { width: 7px; }
.tools button.on { width: 9px; height: 9px; padding: 1px; background: #ffd26d; outline: 1px solid #dda945; outline-offset: -1px; }
.tools .gap { margin-left: 4px; }
.panel { display: flex; flex-direction: column; }
.seq { flex: 240; min-height: 0; }
.treewrap { flex: 1; min-height: 0; display: flex; background: #fff; border: 1px solid #b9c1cd; border-top: 0; }
.tree { flex: 1; min-width: 0; display: flex; flex-direction: column; padding-right: 18px; color: #0c0e11; }
.tree h3 { height: 9px; line-height: 9px; padding-left: 1px; }
.tree ul { flex: 1; display: flex; flex-direction: column; }
.tree li { flex: 1; min-height: 0; display: flex; align-items: center; gap: 1px; margin-left: 14px; padding-left: 1px; white-space: nowrap; position: relative; }
.tree li svg { width: 7px; height: 7px; }
.tree li.ex::before { content: "▷"; position: absolute; left: -8px; font-size: 4px; color: #777; }
.tree li.sel { outline: 1px solid #a3b4cc; outline-offset: -1px; }
.dim span { color: #b7b9bc; }
.scroll { width: 7px; flex: none; display: flex; flex-direction: column; align-items: center; background: #f0f1f3; }
.scroll svg { width: 6px; height: 8px; margin-top: auto; }
.scroll .up { transform: rotate(180deg); margin: 0; }
.thumb { width: 6px; height: 54px; margin-top: 112px; background: #c5c7cb; }

.pci { flex: 124; min-height: 0; }
.pci .tools input { flex: 1; min-width: 0; height: 8px; background: #fff; }
.box { flex: 1; display: flex; flex-direction: column; margin-top: 1px; border: 1px solid #aeb6c3; background: #fff; }
.box .tools { height: 13px; background: #e6eaf1; }
.tools .search { flex: 1; display: flex; align-items: center; height: 10px; margin-left: 2px; background: #fff; border: 1px solid #b0b6c0; padding: 0 2px; }
.split { flex: 1; display: grid; grid-template-columns: 1fr 1fr; }
.split div + div { border-left: 1px solid #e8eaee; }
.ptabs { display: flex; gap: 4px; height: 10px; padding: 1px 2px; }
.ptabs button { display: flex; align-items: center; gap: 2px; padding: 0 1px; }
.ptabs svg { width: 6px; height: 6px; }
.ptabs .active { background: #fff; }
.pcistat { height: 8px; flex: none; display: flex; align-items: center; gap: 6px; padding-left: 2px; background: linear-gradient(#aab2bd, #c2c8d1); }
.pcistat svg { width: 7px; height: 7px; }

.stage { flex: 1; min-width: 0; display: flex; flex-direction: column; }
.view { flex: 1; min-height: 0; position: relative; background: #000; }
.scene { position: absolute; width: 100%; height: 100%; }
.tiny { font: 4px "Open Sans", sans-serif; fill: #222; text-anchor: middle; }
.machine { font: 13px "Lato", sans-serif; fill: #3a4048; stroke: #656d76; stroke-width: .3px; text-anchor: middle; }
.axis { font: 7px "Open Sans", sans-serif; fill: #777; stroke: #999; stroke-width: .3px; }
.vtools { position: absolute; left: 4px; top: 3px; display: grid; grid-template-columns: repeat(7, 13px); grid-auto-rows: 13px; gap: 2px; }
.vtools button { padding: 1px; }
.vtools svg { width: 11px; height: 11px; }
.vtools .first { grid-column: 1; } .vtools .third { grid-column: 3; }
.o { background: #f06414; } .p { background: #ed7a30; } .c { background: #19c5e6; } .b { background: #0b50ce; } .l { background: #3d74d8; }
.vstat { height: 9px; flex: none; display: flex; align-items: center; gap: 5px; background: #f2f2f2; padding-right: 1px; }
.vstat > svg { width: 8px; height: 8px; }
.dyn { width: 50px; height: 9px; display: flex; align-items: center; gap: 1px; background: #9bb5d9; }
.dyn svg { width: 7px; height: 7px; }
.pick { display: flex; align-items: center; width: 41px; height: 8px; border: 1px solid #b0b0b0; background: #e7e7e7; margin-left: -3px; }
.pick select { appearance: none; flex: 1; min-width: 0; padding-left: 1px; }
.pick svg { width: 6px; height: 6px; }
.pick.white { width: 31px; background: #fff; }
.vwin { margin-left: auto; display: flex; align-items: center; gap: 1px; }
.vwin button { width: 5px; height: 4px; background: #555; }
.vwin button:last-child { background: none; height: 5px; }
.vwin svg { width: 5px; height: 5px; }
.simul { flex: none; height: 40px; margin-top: 4px; background: #f0f0f0; }
.srow { height: 11px; display: flex; align-items: center; padding: 1px 1px 0 4px; gap: 5px; }
.trans { display: flex; gap: 2px; }
.trans button { width: 8px; height: 8px; background: #e3e3e3; border: 1px solid #cbcbcb; }
.trans svg { width: 6px; height: 6px; }
input[type=range] { appearance: none; flex: 1; min-width: 0; height: 8px; }
input[type=range]::-webkit-slider-thumb { appearance: none; background: #0878d0; width: 5px; height: 8px; border-radius: 2px 2px 0 0; }
.r1 { background: #e9e9e9; }
.r2 { background: linear-gradient(transparent 3px, #d2d2d2 3px 5px, transparent 5px); }
input.r2::-webkit-slider-thumb { width: 3px; height: 5px; border-radius: 0; }
.const { width: 29px; height: 9px; display: flex; align-items: center; gap: 0; border: 1px solid #adadad; background: #e4e4e4; padding-left: 1px; }
.const svg { width: 6px; height: 6px; }
.spin { width: 5px; height: 9px; display: flex; flex-direction: column; font-size: 3px; line-height: 4px; text-align: center; border: 1px solid #aaa; margin-right: -5px; }
.num { width: 11px; height: 9px; background: #fff; border: 1px solid #888; padding-left: 2px; }
.op { width: 56px; }

.tracking { flex: none; border-left: 1px solid #c3cad6; }
.coords { height: 11px; display: flex; align-items: center; gap: 2px; padding-left: 1px; background: #e3e8ef; }
.coords output { width: 27px; height: 7px; padding-left: 1px; background: #fff; line-height: 7px; }
.coords output:nth-child(3) { margin-right: 4px; }
.coords button { width: 8px; height: 8px; }
.coords svg { width: 8px; height: 8px; }
.coords .on { background: #ffc861; }
.blank { height: 18px; background: #fff; }

.status { height: 8px; flex: none; display: flex; align-items: center; justify-content: space-between; padding: 0 1px; background: linear-gradient(#a2a9b3, #c8cdd6 4px, #bcc3ce); }
.status ul { display: flex; gap: 3px; color: #8c939e; }
.status li + li { border-left: 1px solid #a8afba; padding-left: 1px; }
.status .on { color: #111; }
```
